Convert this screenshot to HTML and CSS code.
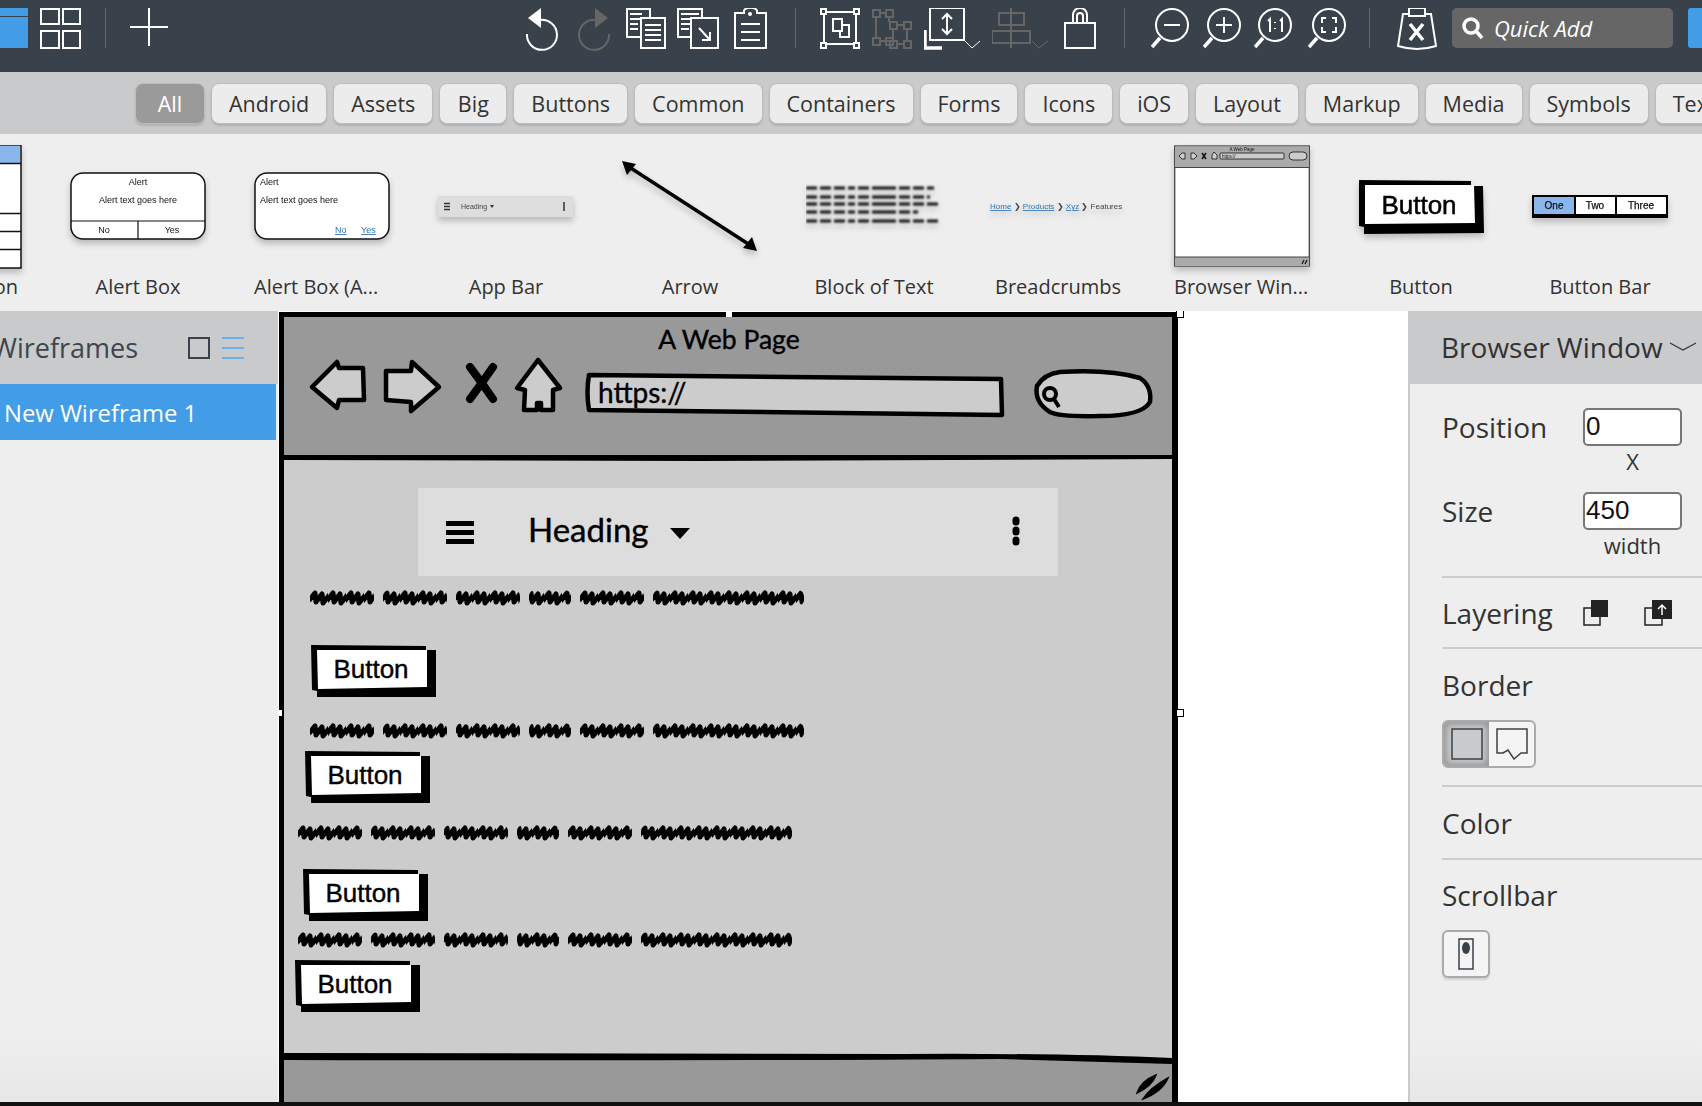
FILE: index.html
```html
<!DOCTYPE html>
<html lang="en">
<head>
  <meta charset="UTF-8">
  <meta name="viewport" content="width=device-width, initial-scale=1.0">
  <title>Wireframe Editor</title>
  <link rel="stylesheet" href="styles.css">
</head>
<body>
  <!-- Top toolbar -->
  <header class="toolbar">
    <div class="app-tab"><span></span></div>
    <svg class="ico" width="65" height="44" viewBox="0 0 65 44"><path d="M1 1h18v15H1zM23 1h17v15H23zM1 23h18v17H1zM23 23h17v17H23z"/></svg>
    <i class="sep"></i>
    <svg class="ico" width="396" height="44" viewBox="0 0 396 44"><path d="M19 0v38M0 19h38"/></svg>

    <svg class="ico" width="52" height="44" viewBox="0 0 52 44"><path d="M14 12A15 15 0 1 1 1 26"/><path class="solid" d="M15 0v20L2 10z"/></svg>
    <svg class="ico off" width="48" height="44" viewBox="0 0 48 44"><path d="M18 12A15 15 0 1 0 31 26"/><path class="solid" d="M17 0v20L30 10z"/></svg>
    <svg class="ico" width="51" height="44" viewBox="0 0 51 44"><path d="M15 29H1V1h16l7 0v9M4 6h12M4 11h12M4 16h8M4 21h8"/><path d="M15 10h24v30H15zM19 17h16M19 22h16M19 27h16M19 32h16"/></svg>
    <svg class="ico" width="57" height="44" viewBox="0 0 57 44"><path d="M14 29H1V1h24v9M4 6h18M4 11h10M4 16h10M4 21h8"/><path d="M14 10h27v30H14zM22 20l11 12M33 24v8h-8"/></svg>
    <svg class="ico" width="61" height="44" viewBox="0 0 61 44"><path d="M10 5H1v35h31V5h-9V3a6 3 0 0 0-13 0zM7 16h19M7 24h19M7 32h19"/><circle class="solid" cx="16" cy="6" r="2"/></svg>
    <i class="sep"></i>
    <svg class="ico" width="52" height="44" viewBox="0 0 52 44"><path d="M5 4h30M5 36h30M4 5v30M36 5v30M1 1h5v5H1zM34 1h5v5h-5zM1 35h5v5H1zM34 35h5v5h-5z"/><path d="M13 11h9v6h7v12h-9v-6h-7zM22 17v6h-2"/></svg>
    <svg class="ico off" width="52" height="44" viewBox="0 0 52 44"><path d="M1 2h7v7H1zM14 2h7v7h-7zM1 30h7v7H1zM14 30h7v7h-7zM18 14h7v7h-7zM32 14h7v7h-7zM18 33h7v7h-7zM32 33h7v7h-7zM8 5h6M4 9v21M17 9v5M8 33h10M25 17h7M25 36h7M21 21v9M35 21v12"/></svg>
    <svg class="ico" width="68" height="44" viewBox="0 0 68 44"><path d="M6 0h34v32H6zM23 6v20M18 11l5-5 5 5M18 21l5 5 5-5"/><path class="thick" d="M1 22v18h17"/><path class="thin" d="M41 33l7 7 8-7"/></svg>
    <svg class="ico off" width="72" height="44" viewBox="0 0 72 44"><path d="M19 0v40M7 5h25v12H7zM0 23h38v12H0z"/><path class="thin" d="M40 33l7 7 9-7"/></svg>
    <svg class="ico" width="60" height="44" viewBox="0 0 60 44"><path d="M1 15h30v25H1zM9 15V7a7 7 0 0 1 14 0v8M13 15V8a3 3 0 0 1 6 0v7"/></svg>
    <i class="sep mid"></i>
    <svg class="ico" width="52" height="44" viewBox="0 0 52 44"><circle cx="21" cy="17" r="16"/><path d="M13 17h16"/><path class="thick" d="M9 30L1 39"/></svg>
    <svg class="ico" width="51" height="44" viewBox="0 0 51 44"><circle cx="21" cy="17" r="16"/><path d="M13 17h16M21 9v16"/><path class="thick" d="M9 30L1 39"/></svg>
    <svg class="ico" width="54" height="44" viewBox="0 0 54 44"><circle cx="21" cy="17" r="16"/><path d="M14 13l2-2v13M21 14v1M21 20v1M26 13l2-2v13"/><path class="thick" d="M9 30L1 39"/></svg>
    <svg class="ico" width="61" height="44" viewBox="0 0 61 44"><circle cx="21" cy="17" r="16"/><path d="M18 10h-4v5M24 10h4v5M18 24h-4v-5M24 24h4v-5"/><path class="thick" d="M9 30L1 39"/></svg>
    <i class="sep wide"></i>
    <svg class="ico" width="55" height="44" viewBox="0 0 55 44"><path d="M12 6H6L1 38q19 6 38 0L34 6h-6M12 0h16v8H12z"/><path class="thick" d="M13 16l13 16M26 16L13 32"/></svg>
    <div class="quick-add">
      <svg class="ico" width="22" height="24" viewBox="0 0 22 24"><circle class="bold" cx="9" cy="10" r="7"/><path class="bold" d="M14 15l6 7"/></svg>
      <span>Quick Add</span>
    </div>
    <div class="user-tab"></div>
  </header>

  <!-- Category filter -->
  <nav class="filters">
    <button class="tab active">All</button>
    <button class="tab">Android</button>
    <button class="tab">Assets</button>
    <button class="tab">Big</button>
    <button class="tab">Buttons</button>
    <button class="tab">Common</button>
    <button class="tab">Containers</button>
    <button class="tab">Forms</button>
    <button class="tab">Icons</button>
    <button class="tab">iOS</button>
    <button class="tab">Layout</button>
    <button class="tab">Markup</button>
    <button class="tab">Media</button>
    <button class="tab">Symbols</button>
    <button class="tab">Text</button>
  </nav>

  <!-- Component library -->
  <section class="library">
    <figure class="item">
      <svg class="thumb" viewBox="0 0 136 130"><rect x="-2" y="0" width="137" height="123" fill="#fff" stroke="#111" stroke-width="1.5"/><rect x="-1" y="1" width="135" height="17" fill="#8ab6ec"/><path d="M0 18.500h135M0 68.500h135M0 86.500h135M0 104.500h135" stroke="#111" stroke-width="1.5"/></svg>
      <figcaption class="end">Accordion</figcaption>
    </figure>
    <figure class="item">
      <svg class="thumb" viewBox="0 0 136 130"><rect x="1" y="28" width="134" height="66" rx="12" fill="#fff" stroke="#111" stroke-width="1.5"/><path d="M1 76h134M68 76v18" stroke="#111" stroke-width="1.2"/><g class="tiny"><text x="68" y="40" text-anchor="middle">Alert</text><text x="68" y="58" text-anchor="middle">Alert text goes here</text><text x="34" y="88" text-anchor="middle">No</text><text x="102" y="88" text-anchor="middle">Yes</text></g></svg>
      <figcaption>Alert Box</figcaption>
    </figure>
    <figure class="item">
      <svg class="thumb" viewBox="0 0 136 130"><rect x="1" y="28" width="134" height="66" rx="12" fill="#fff" stroke="#111" stroke-width="1.5"/><g class="tiny"><text x="6" y="40">Alert</text><text x="6" y="58">Alert text goes here</text><text class="link" x="81" y="88">No</text><text class="link" x="107" y="88">Yes</text></g></svg>
      <figcaption class="start">Alert Box (A...</figcaption>
    </figure>
    <figure class="item">
      <svg class="thumb" viewBox="0 0 136 130"><rect x="0" y="51" width="135" height="21" fill="#ddd"/><path d="M6 58.500h6M6 61.500h6M6 64.500h6M126 57v9" stroke="#333" stroke-width="1.500"/><path d="M52 60h4l-2 3z" fill="#333"/><text class="tiny mini" x="23" y="64">Heading</text></svg>
      <figcaption>App Bar</figcaption>
    </figure>
    <figure class="item">
      <svg class="thumb" viewBox="0 0 136 130"><path d="M4 20L131 102" stroke="#000" stroke-width="3.500"/><path d="M0 16l14 3-9 11zM135 106l-14-3 9-11z" fill="#000"/></svg>
      <figcaption>Arrow</figcaption>
    </figure>
    <figure class="item">
      <svg class="thumb" viewBox="0 0 136 130"><g class="blur-lines"><path d="M0 43h128M0 52h124M0 59h134M0 67h112M0 76h134"/></g></svg>
      <figcaption>Block of Text</figcaption>
    </figure>
    <figure class="item">
      <svg class="thumb" viewBox="0 0 136 130"><text class="crumbs" x="0" y="64"><tspan class="crumb-link">Home</tspan> ❯ <tspan class="crumb-link">Products</tspan> ❯ <tspan class="crumb-link">Xyz</tspan> ❯ Features</text></svg>
      <figcaption>Breadcrumbs</figcaption>
    </figure>
    <figure class="item">
      <svg class="thumb" viewBox="0 0 136 130"><rect x="0.700" y="1" width="134.600" height="120" fill="#fff" stroke="#444" stroke-width="1.300"/><rect x="1" y="1.500" width="134" height="21" fill="#aaa"/><rect x="1" y="112" width="134" height="9" fill="#aaa"/><path d="M1 22.500h134M1 112h134" stroke="#444"/><path d="M5 11l3-3h3v6H8zM17 8h3l3 3-3 3h-3zM40 7l3 3v4h-5v-4z" fill="#ccc" stroke="#111" stroke-width=".8"/><path d="M28 8l4 6M32 8l-4 6" stroke="#111" stroke-width="1.500"/><path d="M128 119l2-4M131 119l2-4" stroke="#111" stroke-width="1.200"/><rect x="46" y="8" width="64" height="6" rx="1" fill="#ccc" stroke="#111" stroke-width=".8"/><rect x="115" y="7" width="18" height="8" rx="4" fill="#ccc" stroke="#111" stroke-width=".8"/><text class="tiny micro" x="68" y="6" text-anchor="middle">A Web Page</text><text class="tiny micro" x="48" y="13">https://</text></svg>
      <figcaption class="start">Browser Win...</figcaption>
    </figure>
    <figure class="item tight">
      <svg class="thumb" viewBox="0 0 136 130"><path d="M6 35l112 1v5h12l1 47-120 1v-7l-5-1z" fill="#000"/><path d="M12 40l109 0 1 38-110 1z" fill="#fff"/><text class="thumb-btn" x="66" y="69" text-anchor="middle">Button</text></svg>
      <figcaption>Button</figcaption>
    </figure>
    <figure class="item tight">
      <svg class="thumb" viewBox="0 0 136 130"><rect x="0" y="50" width="136" height="23" fill="#000"/><rect x="2" y="52" width="40" height="17" fill="#8ab6ec"/><rect x="44" y="52" width="39" height="17" fill="#fff"/><rect x="85" y="52" width="49" height="17" fill="#fff"/><g class="tiny bar"><text x="22" y="64" text-anchor="middle">One</text><text x="63" y="64" text-anchor="middle">Two</text><text x="109" y="64" text-anchor="middle">Three</text></g></svg>
      <figcaption>Button Bar</figcaption>
    </figure>
  </section>

  <main class="main">
    <!-- Wireframe list -->
    <aside class="pages">
      <div class="pages-head">
        <span class="pages-title">Wireframes</span>
        <span class="view-grid"></span>
        <span class="view-list"><i></i><i></i><i></i></span>
      </div>
      <div class="page-row">New Wireframe 1</div>
    </aside>

    <!-- Drawing canvas, coordinates in the svg are page pixels -->
    <div class="canvas">
      <svg class="sketch" viewBox="278 311 1130 791" width="1130" height="791">
        <defs>
          <pattern id="ticks" width="18" height="16" patternUnits="userSpaceOnUse">
            <path d="M-3 13L5 3 6 12 12 4 13 13 21 3" fill="none" stroke="#000" stroke-width="5" stroke-linecap="round" stroke-linejoin="round"/>
          </pattern>
          <g id="scribble">
            <g fill="url(#ticks)"><rect x="0" y="0" width="64" height="16" rx="6"/><rect x="73" y="0" width="64" height="16" rx="6"/><rect x="146" y="0" width="64" height="16" rx="6"/><rect x="219" y="0" width="42" height="16" rx="6"/><rect x="270" y="0" width="64" height="16" rx="6"/><rect x="343" y="0" width="151" height="16" rx="6"/></g>
          </g>
        </defs>

        <rect x="279" y="312" width="899" height="790" fill="#000"/>
        <rect x="284" y="317" width="888" height="138" fill="#999"/>
        <path d="M284 460L700 461 1172 459V1058Q1060 1053 900 1054L284 1053z" fill="#ccc"/>
        <path d="M284 1060Q700 1061 1000 1059L1172 1064V1102H284z" fill="#999"/>

        <!-- browser chrome -->
        <g fill="#ccc" stroke="#000" stroke-width="4.500" stroke-linejoin="round">
          <path d="M312 387L337 362 339 368 363 368 364 400 339 400 337 408z"/>
          <path d="M386 371L411 371 412 362 439 387 411 411 411 402 386 400z"/>
          <path d="M538 360L517 388 525 390 524 410 537 410 537 403 541 403 541 410 553 410 553 390 560 388z"/>
          <path d="M589 375L1001 379 1002 415 589 410Q586 392 589 375z"/>
          <path d="M1060 372Q1110 369 1140 378 1152 386 1150 402 1142 416 1100 416 1060 417 1050 412 1034 402 1037 386 1044 374 1060 372z"/>
        </g>
        <path d="M470 367Q482 383 493 399M493 367Q482 383 470 399" fill="none" stroke="#000" stroke-width="8" stroke-linecap="round"/>
        <circle cx="1050" cy="394" r="6" fill="none" stroke="#000" stroke-width="4"/>
        <path d="M1054 399L1059 407" stroke="#000" stroke-width="4"/>

        <!-- app bar -->
        <rect x="418" y="488" width="640" height="88" fill="#ddd"/>
        <path d="M446 523.500h28M446 532.500h28M446 541.500h28" stroke="#000" stroke-width="5"/>
        <path d="M670 528h20l-10 11z" fill="#000"/>
        <path d="M1016 520v2M1016 530v2M1016 540v2" stroke="#000" stroke-width="7" stroke-linecap="round"/>

        <use href="#scribble" x="310" y="590"/>
        <use href="#scribble" x="310" y="723"/>
        <use href="#scribble" x="298" y="825"/>
        <use href="#scribble" x="298" y="932"/>

        <!-- resize grip -->
        <path d="M1137 1093Q1141 1081 1156 1075 1152 1086 1137 1093zM1143 1099Q1150 1088 1168 1078 1162 1092 1143 1099z" fill="#000" stroke="#000" stroke-width="1.500"/>
      </svg>

      <span class="wire-text wire-title">A Web Page</span>
      <span class="wire-text wire-url">https://</span>
      <span class="wire-text wire-heading">Heading</span>

      <div class="wire-btn b1"><span>Button</span></div>
      <div class="wire-btn b2"><span>Button</span></div>
      <div class="wire-btn b3"><span>Button</span></div>
      <div class="wire-btn b4"><span>Button</span></div>

      <i class="handle h-top"></i>
      <i class="handle h-corner"></i>
      <i class="handle h-left"></i>
      <i class="handle h-right"></i>
    </div>

    <!-- Properties -->
    <aside class="props">
      <div class="props-head">
        <span>Browser Window</span>
        <svg width="28" height="10" viewBox="0 0 28 10"><path d="M1 1l13 7 13-7" fill="none" stroke="#333" stroke-width="1.200"/></svg>
      </div>
      <div class="prop-section fields">
        <div class="field">
          <label>Position</label>
          <div class="field-box"><div class="field-input">0</div><div class="field-cap">X</div></div>
        </div>
        <div class="field">
          <label>Size</label>
          <div class="field-box"><div class="field-input">450</div><div class="field-cap">width</div></div>
        </div>
      </div>
      <div class="prop-section layering">
        <label>Layering</label>
        <svg class="layer-ico" width="61" height="26" viewBox="0 0 61 26"><path d="M1 8h16v17H1z" fill="none" stroke="#222" stroke-width="1.500"/><rect x="8" y="0" width="17" height="17" fill="#222"/></svg>
        <svg width="28" height="26" viewBox="0 0 28 26"><path d="M1 8h17v17H1z" fill="none" stroke="#222" stroke-width="1.500"/><rect x="8" y="0" width="20" height="19" fill="#222"/><path d="M18 15V5M14 9l4-4 4 4" fill="none" stroke="#fff" stroke-width="1.500"/></svg>
      </div>
      <div class="prop-section border">
        <label>Border</label>
        <div class="btn-group">
          <span class="seg active"><svg width="32" height="32" viewBox="0 0 32 32"><rect x="1" y="1" width="30" height="30" fill="#c9cacc" stroke="#39414a" stroke-width="1.500"/></svg></span>
          <span class="seg"><svg width="32" height="32" viewBox="0 0 32 32"><path d="M1 1h30v24h-6l-7 6-6-9-5 3H1z" fill="none" stroke="#39414a" stroke-width="1.500"/></svg></span>
        </div>
      </div>
      <div class="prop-section color">
        <label>Color</label>
      </div>
      <div class="prop-section last">
        <label>Scrollbar</label>
        <span class="seg single"><svg width="16" height="32" viewBox="0 0 16 32"><rect x="1" y="1" width="14" height="30" fill="none" stroke="#39414a" stroke-width="1.500"/><ellipse cx="8" cy="10" rx="4" ry="6" fill="#39414a"/></svg></span>
      </div>
    </aside>
  </main>
  <div class="strip"></div>
</body>
</html>
```

FILE: styles.css
```css
:root {
  --dark: #39414a;
  --gray: #c9cacc;
  --panel: #eeeeee;
  --blue: #429de6;
  --text: #333;
}
html, body {
  margin: 0;
  height: 1106px;
  overflow: hidden;
}
body {
  font-family: "Open Sans", sans-serif;
  color: var(--text);
  background: var(--panel);
}
figure {
  margin: 0;
}

/* toolbar */
.toolbar {
  display: flex;
  align-items: flex-start;
  height: 64px;
  padding-top: 8px;
  background: var(--dark);
}
.app-tab {
  flex: none;
  width: 28px;
  height: 40px;
  margin-right: 12px;
  padding-top: 9px;
  box-sizing: border-box;
  background: linear-gradient(var(--blue) 8px, var(--dark) 8px, var(--dark) 9px, transparent 9px);
}
.app-tab span {
  display: block;
  height: 31px;
  background: var(--blue);
}
.ico {
  flex: none;
  display: block;
  fill: none;
  stroke: #fff;
  stroke-width: 2;
}
.ico.off {
  stroke: #666;
}
.ico .solid {
  fill: #fff;
  stroke: none;
}
.ico.off .solid {
  fill: #666;
}
.ico .thick {
  stroke-width: 3.500;
}
.ico .thin {
  stroke-width: 1;
}
.ico .bold {
  stroke-width: 3.500;
}
.sep {
  flex: none;
  width: 1px;
  height: 40px;
  margin-right: 24px;
  background: #666;
}
.sep.mid {
  margin-right: 26px;
}
.sep.wide {
  margin-right: 27px;
}
.quick-add {
  flex: none;
  display: flex;
  align-items: center;
  gap: 10px;
  width: 221px;
  height: 40px;
  padding-left: 10px;
  box-sizing: border-box;
  border-radius: 5px;
  background: #666;
  color: #fff;
  font-size: 22px;
  font-style: italic;
  margin-right: 15px;
}
.user-tab {
  flex: none;
  width: 14px;
  height: 40px;
  border-radius: 3px 0 0 3px;
  background: var(--blue);
}

/* filter tabs */
.filters {
  display: flex;
  gap: 6px;
  height: 62px;
  box-sizing: border-box;
  padding: 11px 0 0 135px;
  background: var(--gray);
  overflow: hidden;
}
.tab {
  flex: none;
  min-width: 68px;
  height: 41px;
  padding: 0 17px;
  border: 1px solid #bdbdbd;
  border-radius: 8px;
  background: #ececec;
  box-shadow: 0 2px 2px rgba(0, 0, 0, .12);
  color: var(--text);
  font: 21.500px "Open Sans", sans-serif;
}
.tab.active {
  min-width: 70px;
  background: #9a9a9a;
  color: #fff;
}

/* library strip */
.library {
  display: flex;
  gap: 48px;
  height: 177px;
  margin-left: -114px;
  padding-top: 11px;
  box-sizing: border-box;
  background: var(--panel);
}
.item {
  flex: none;
  width: 136px;
}
.item.tight {
  margin-left: -5px;
}
.thumb {
  display: block;
  width: 136px;
  height: 130px;
  overflow: hidden;
  filter: drop-shadow(0 4px 3px rgba(0, 0, 0, .22));
}
figcaption {
  margin-top: -3px;
  font-size: 20px;
  line-height: 30px;
  text-align: center;
  white-space: nowrap;
}
figcaption.start {
  text-align: left;
}
figcaption.end {
  padding-right: 4px;
  text-align: right;
}
.tiny {
  font: 9px "Liberation Sans", sans-serif;
  fill: #111;
}
.tiny.mini {
  font-size: 7px;
  fill: #444;
}
.tiny.micro {
  font-size: 4.500px;
}
.tiny.bar {
  font-size: 10px;
  stroke: #111;
  stroke-width: .25;
}
.tiny .link {
  fill: #2f74b5;
  text-decoration: underline;
}
.blur-lines {
  fill: none;
  stroke: #111;
  stroke-width: 3;
  stroke-dasharray: 11 3 11 3 11 3 7 3 11 3 24 3;
  filter: blur(.9px);
}
.crumbs {
  font: 8px "Liberation Sans", sans-serif;
  fill: #444;
}
.crumb-link {
  fill: #2f74b5;
  text-decoration: underline;
}
.thumb-btn {
  font: 26px "Liberation Sans", sans-serif;
  fill: #000;
  stroke: #000;
  stroke-width: .5;
}

/* main area */
.main {
  display: flex;
  height: 791px;
}
.pages {
  flex: none;
  width: 278px;
  background: linear-gradient(var(--panel) 92%, #e7e7e7);
  overflow: hidden;
}
.pages-head {
  display: flex;
  align-items: center;
  height: 73px;
  background: var(--gray);
  color: #3d454d;
}
.pages-title {
  width: 196px;
  margin-left: -8px;
  font-size: 27px;
}
.view-grid {
  flex: none;
  width: 18px;
  height: 18px;
  border: 2px solid var(--dark);
}
.view-list {
  display: flex;
  flex-direction: column;
  justify-content: space-between;
  width: 22px;
  height: 22px;
  margin-left: 12px;
}
.view-list i {
  height: 2px;
  background: #6ab0ee;
}
.page-row {
  width: 276px;
  height: 56px;
  padding-left: 4px;
  box-sizing: border-box;
  background: var(--blue);
  color: #fff;
  font-size: 23.800px;
  line-height: 58px;
  white-space: nowrap;
}

/* canvas: a free surface, things sit where they were dropped */
.canvas {
  position: relative;
  flex: none;
  width: 1130px;
  background: #fff;
  overflow: hidden;
}
.sketch {
  display: block;
}
.wire-text {
  position: absolute;
  font-family: Lato, sans-serif;
  color: #000;
  white-space: nowrap;
  -webkit-text-stroke: .4px #000;
}
.wire-title {
  left: 378px;
  top: 11px;
  width: 146px;
  font-size: 26.500px;
  line-height: 34px;
  text-align: center;
}
.wire-url {
  left: 320px;
  top: 63px;
  font-size: 28px;
  line-height: 36px;
}
.wire-heading {
  left: 250px;
  top: 196px;
  font-size: 33px;
  line-height: 44px;
}
.wire-btn {
  position: absolute;
  width: 125px;
  height: 52px;
  background: #000;
  clip-path: polygon(0 0, 115px 1px, 115px 5px, 125px 5px, 125px 52px, 6px 52px, 6px 46px, 1px 45px);
}
.wire-btn span {
  position: absolute;
  left: 6px;
  top: 5px;
  width: 110px;
  height: 39px;
  background: #fff;
  clip-path: polygon(0 0, 110px 0, 110px 37px, 1px 39px);
  color: #000;
  font: 26px/38px "Liberation Sans", sans-serif;
  -webkit-text-stroke: .4px #000;
  text-align: center;
  text-indent: -2px;
}
.b1 { left: 33px; top: 334px; }
.b2 { left: 27px; top: 440px; }
.b3 { left: 25px; top: 558px; }
.b4 { left: 17px; top: 649px; }
.handle {
  position: absolute;
  width: 6px;
  height: 6px;
  background: #fff;
}
.h-top { left: 448px; top: 0; }
.h-left { left: 0; top: 399px; width: 4px; }
.h-right { left: 898px; top: 398px; border: 1px solid #000; }
.h-corner { left: 898px; top: 0; border: 1px solid #000; border-top: 0; }

/* properties */
.props {
  flex: none;
  width: 294px;
  box-sizing: border-box;
  border-left: 2px solid var(--gray);
  background: linear-gradient(var(--panel) 92%, #e7e7e7);
  font-size: 28px;
  overflow: hidden;
}
.props-head {
  display: flex;
  align-items: center;
  gap: 6px;
  height: 71px;
  padding: 0 0 2px 33px;
  margin-left: -2px;
  background: var(--gray);
  white-space: nowrap;
}
.prop-section {
  margin-left: 32px;
  border-bottom: 2px solid #ccc;
}
.prop-section label {
  display: block;
  line-height: 38px;
}
.fields {
  height: 194px;
  box-sizing: border-box;
  padding-top: 24px;
}
.field {
  display: flex;
  height: 84px;
}
.field label {
  width: 141px;
}
.field-box {
  width: 99px;
}
.field-input {
  height: 38px;
  box-sizing: border-box;
  padding-left: 1px;
  border: 2px solid #777;
  border-radius: 5px;
  background: #fff;
  color: #111;
  font: 26px/33px "Liberation Sans", sans-serif;
}
.field-cap {
  font-size: 22px;
  line-height: 31px;
  text-align: center;
}
.layering {
  display: flex;
  align-items: center;
  height: 71px;
  box-sizing: border-box;
}
.layering label {
  width: 141px;
}
.border {
  height: 138px;
  box-sizing: border-box;
  padding-top: 17px;
}
.btn-group {
  display: flex;
  width: 94px;
  height: 48px;
  margin-top: 16px;
  box-sizing: border-box;
  border: 2px solid #aaa;
  border-radius: 6px;
  overflow: hidden;
  background: #f4f4f4;
}
.seg {
  display: flex;
  align-items: center;
  justify-content: center;
  flex: 1;
}
.seg.active {
  background: #c9cacc;
  box-shadow: inset 0 0 6px 3px #999;
}
.color {
  height: 73px;
  box-sizing: border-box;
  padding-top: 17px;
}
.last {
  border-bottom: 0;
  padding-top: 16px;
}
.seg.single {
  width: 48px;
  height: 48px;
  margin-top: 16px;
  box-sizing: border-box;
  border: 2px solid #aaa;
  border-radius: 6px;
  background: #f4f4f4;
  box-shadow: 0 2px 2px rgba(0, 0, 0, .12);
}
.strip {
  height: 4px;
  background: #111;
}
```
